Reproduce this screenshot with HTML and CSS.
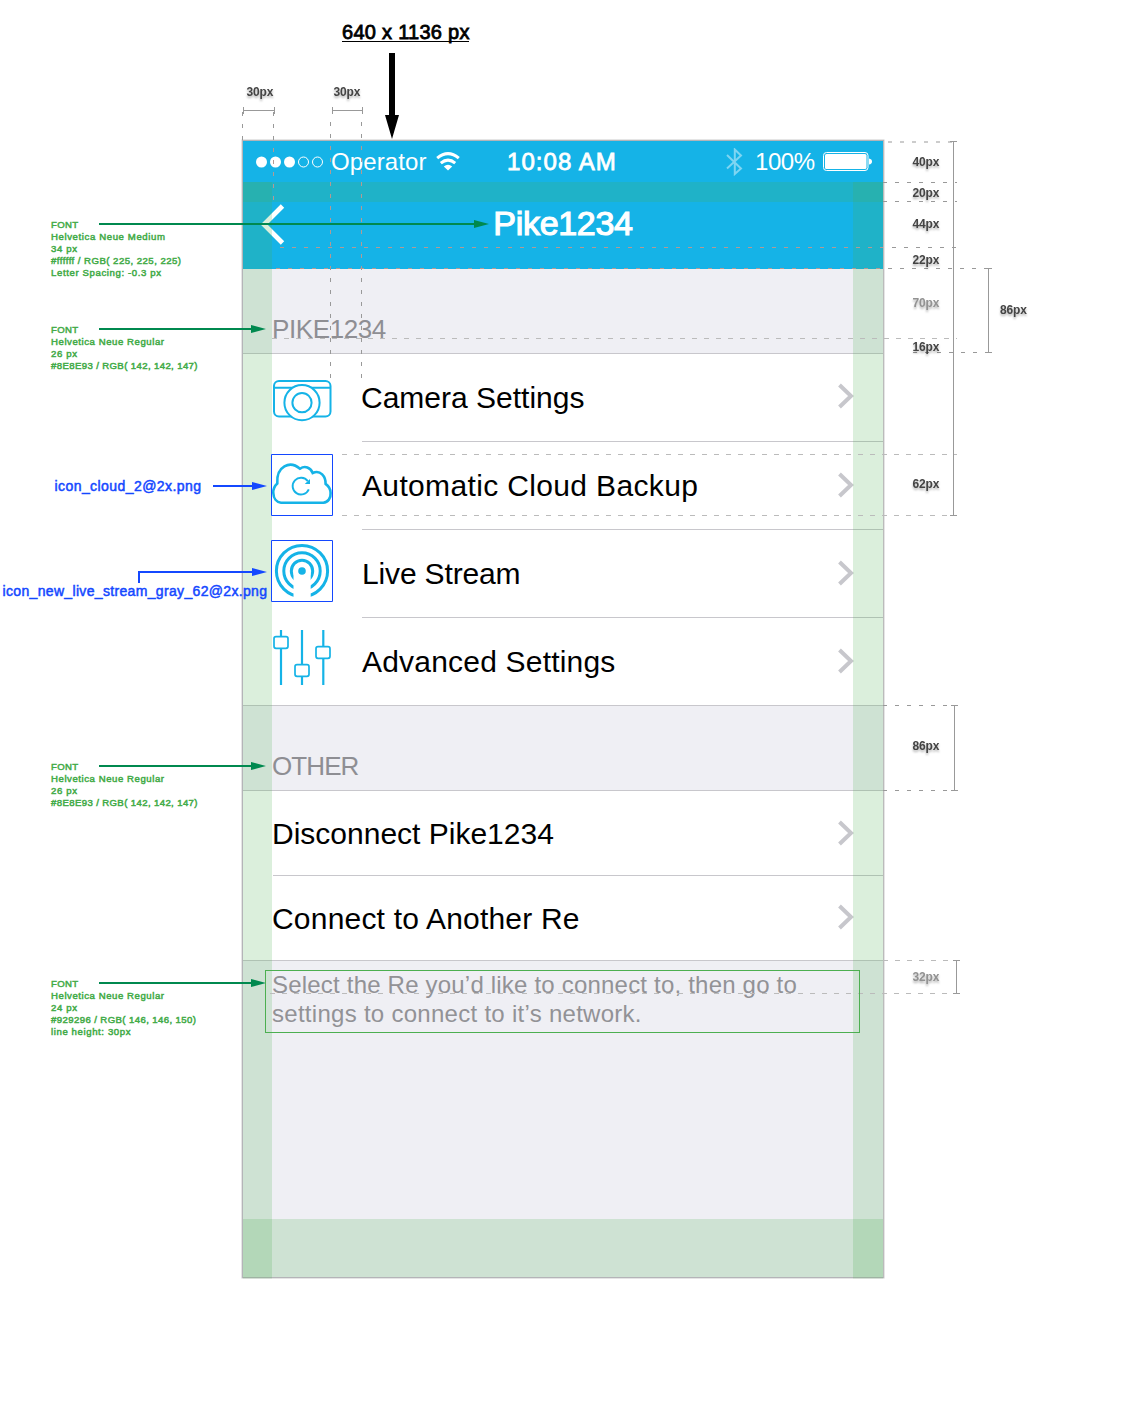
FILE: index.html
```html
<!DOCTYPE html>
<html lang="en">
<head>
<meta charset="utf-8">
<title>Pike1234 settings spec</title>
<link rel="stylesheet" href="styles.css">
</head>
<body>
<div class="sheet">
  <main class="phone">
    <header class="bar">
      <div class="status">
        <svg class="dots" width="70" height="14" viewBox="255 154.500 70 14"><g fill="#fff"><circle cx="261.500" cy="161.500" r="5.500"/><circle cx="275.500" cy="161.500" r="5.500"/><circle cx="289.500" cy="161.500" r="5.500"/></g><g fill="none" stroke="#fff"><circle cx="303.500" cy="161.500" r="5"/><circle cx="317.500" cy="161.500" r="5"/></g></svg>
        <span class="operator">Operator</span>
        <svg class="wifi" width="24" height="20" viewBox="436.500 152 24 20"><g fill="none" stroke="#fff" stroke-width="3"><path d="M437.700 158.200Q448.500 149 459.300 158.200"/><path d="M441.300 163.200Q448.500 157.100 455.700 163.200"/></g><path d="M444.300 166.600Q448.500 163 452.700 166.600L448.500 170.600Z" fill="#fff"/></svg>
        <span class="clock">10:08 AM</span>
        <svg class="bluetooth" width="18" height="28" viewBox="725 148 18 28"><path d="M727 155L741 168.500L734.800 174V149.500L741 155.500L727 168.500" fill="none" stroke="#fff" stroke-opacity=".45" stroke-width="2"/></svg>
        <span class="percent">100%</span>
        <svg class="battery" width="50" height="20" viewBox="823 152 50 20"><rect x="823.500" y="152.500" width="44.500" height="18" rx="3" fill="none" stroke="#fff"/><rect x="825" y="154" width="41.500" height="15" rx="1.500" fill="#fff"/><path d="M869 158.500Q872 159 872 161.500T869 164.500Z" fill="#fff"/></svg>
      </div>
      <div class="nav">
        <svg class="back" width="28" height="44" viewBox="258 202 28 44"><path d="M282.500 206L264 224.500L282.500 243" fill="none" stroke="#fff" stroke-width="4.800"/></svg>
        <h1>Pike1234</h1>
      </div>
    </header>

    <h2 class="section">PIKE1234</h2>
    <ul class="list with-icons">
      <li>
        <svg class="icon" viewBox="272 366 62 62"><rect x="274" y="381" width="56.500" height="35.500" rx="5"/><path d="M274 387.700H330.500"/><circle cx="302" cy="402.700" r="17.600" fill="#fff"/><circle cx="302" cy="402.700" r="9.600"/></svg>
        <span>Camera Settings</span><svg class="chevron" viewBox="0 0 16 26"><path d="M1.500 2L13 13L1.500 24"/></svg>
      </li>
      <li>
        <svg class="icon" viewBox="272 454 62 62"><g stroke-width="2.600"><path d="M281 502.700H323.300C328 502.400 331 498 330.600 493C330.500 488.500 328.500 486 325.600 483.900C325.800 476.500 320.500 469.500 312.700 473C310.500 467.500 305 465.200 300 468.700C290 460 276 466 277.300 483.500C274.500 486 273 488.500 273.300 493C273.600 498.500 276.500 502.300 281 502.700Z"/></g><g stroke-width="1.900"><path d="M308.800 489.300A8.400 8.400 0 1 1 307.800 481.100"/></g><path d="M304.800 484H310V479Z" fill="#15b3e7" stroke="none"/></svg>
        <span class="wide">Automatic Cloud Backup</span><svg class="chevron" viewBox="0 0 16 26"><path d="M1.500 2L13 13L1.500 24"/></svg>
      </li>
      <li>
        <svg class="icon" viewBox="272 542 62 62"><defs><clipPath id="mast"><path d="M270 540H335V605H310.700V571H293.500V605H270Z"/></clipPath></defs><g clip-path="url(#mast)" stroke-width="3"><circle cx="302" cy="571" r="25.600"/><circle cx="302" cy="571" r="18.200"/><circle cx="302" cy="571" r="10.700"/></g><circle cx="302" cy="571" r="3.800" fill="#15b3e7" stroke="none"/></svg>
        <span class="live">Live Stream</span><svg class="chevron" viewBox="0 0 16 26"><path d="M1.500 2L13 13L1.500 24"/></svg>
      </li>
      <li>
        <svg class="icon" viewBox="272 630 62 62"><path d="M281 630V685M302 630V685M323.300 630V685" stroke-width="2.200"/><g fill="#fff" stroke-width="1.700"><rect x="274" y="636.700" width="14" height="11.600" rx="2"/><rect x="295" y="664.700" width="14" height="11.600" rx="2"/><rect x="316" y="646.700" width="14" height="11.600" rx="2"/></g></svg>
        <span class="advanced">Advanced Settings</span><svg class="chevron" viewBox="0 0 16 26"><path d="M1.500 2L13 13L1.500 24"/></svg>
      </li>
    </ul>

    <h2 class="section other">OTHER</h2>
    <ul class="list plain">
      <li><span>Disconnect Pike1234</span><svg class="chevron" viewBox="0 0 16 26"><path d="M1.500 2L13 13L1.500 24"/></svg></li>
      <li><span class="connect">Connect to Another Re</span><svg class="chevron" viewBox="0 0 16 26"><path d="M1.500 2L13 13L1.500 24"/></svg></li>
    </ul>
    <p class="hint">Select the Re you’d like to connect to, then go to<br><span>settings to connect to it’s network.</span></p>
  </main>

  <svg class="notes" width="1126" height="1418" viewBox="0 0 1126 1418">
    <g class="guides">
      <rect x="243" y="182" width="640" height="20"/>
      <rect x="243" y="182" width="29" height="1096.500"/>
      <rect x="853" y="182" width="30" height="1096.500"/>
      <rect x="243" y="1219" width="640" height="58"/>
    </g>

    <g class="dashes">
      <path d="M242.500 112V141M273.500 112V141M330.500 122V378M361.500 122V378"/>
      <path d="M888 142H956M883 182.500H957M883 201.500H957M892 247.500H957M888 268.500H985M913 352.500H985"/>
      <path d="M883 705.500H957M883 790.500H957"/>
      <g class="warm"><path d="M273.500 148V200M330.500 146V268M361.500 146V268M280 247.500H883M276 268.500H883"/></g>
      <g class="faint"><path d="M272 338.500H957M342 454.500H957M342 515.500H957M883 960.500H957M270 993.500H957"/></g>
    </g>
    <g class="measures">
      <path d="M243 110.500H275M243.500 107V114M274.500 107V114M332 110.500H363M332.500 107V114M362.500 107V114"/>
      <path d="M953.500 141V516M950 141.500H957M950 515.500H957M988.500 268V353M985 268.500H992M985 352.500H992"/>
      <path d="M954.500 705V791M951 705.500H958M951 790.500H958M956.500 960V994M953 960.500H960M953 993.500H960"/>
    </g>
    <g class="sizes">
      <text x="246.500" y="96" textLength="27">30px</text>
      <text x="333.500" y="96" textLength="27">30px</text>
      <text x="912.500" y="166" textLength="27">40px</text>
      <text x="912.500" y="197" textLength="27">20px</text>
      <text x="912.500" y="228" textLength="27">44px</text>
      <text x="912.500" y="264" textLength="27">22px</text>
      <text class="pale" x="912.500" y="307" textLength="27">70px</text>
      <text x="912.500" y="351" textLength="27">16px</text>
      <text x="1000" y="314" textLength="27">86px</text>
      <text x="912.500" y="488" textLength="27">62px</text>
      <text x="912.500" y="750" textLength="27">86px</text>
      <text class="pale" x="912.500" y="981" textLength="27">32px</text>
    </g>

    <text class="canvas-size" x="342" y="39" textLength="127.500">640 x 1136 px</text>
    <path d="M342 41.500H469" stroke="#000"/>
    <path d="M389 53H395V115H399L392 139L385 115H389Z"/>

    <g class="font-notes">
      <text x="51" y="228" textLength="27">FONT</text>
      <text x="51" y="240" textLength="114">Helvetica Neue Medium</text>
      <text x="51" y="252" textLength="26">34 px</text>
      <text x="51" y="264" textLength="130">#ffffff / RGB( 225, 225, 225)</text>
      <text x="51" y="276" textLength="110">Letter Spacing: -0.3 px</text>
      <text x="51" y="333" textLength="27">FONT</text>
      <text x="51" y="345" textLength="113">Helvetica Neue Regular</text>
      <text x="51" y="357" textLength="26">26 px</text>
      <text x="51" y="369" textLength="146.500">#8E8E93 / RGB( 142, 142, 147)</text>
      <text x="51" y="770" textLength="27">FONT</text>
      <text x="51" y="782" textLength="113">Helvetica Neue Regular</text>
      <text x="51" y="794" textLength="26">26 px</text>
      <text x="51" y="806" textLength="146.500">#8E8E93 / RGB( 142, 142, 147)</text>
      <text x="51" y="987" textLength="27">FONT</text>
      <text x="51" y="999" textLength="113">Helvetica Neue Regular</text>
      <text x="51" y="1011" textLength="26">24 px</text>
      <text x="51" y="1023" textLength="145">#929296 / RGB( 146, 146, 150)</text>
      <text x="51" y="1035" textLength="79.500">line height: 30px</text>
    </g>
    <g class="green-arrows">
      <path d="M99 224H476M99 329H253M99 766H253M99 983H253"/>
      <path class="head" d="M474 220L489 224L474 228ZM251 325L266 329L251 333ZM251 762L266 766L251 770ZM251 979L266 983L251 987Z"/>
    </g>
    <rect x="265.500" y="970.500" width="594" height="62" fill="none" stroke="#4caf50"/>

    <g class="file-notes">
      <text x="54.500" y="491" textLength="146.500">icon_cloud_2@2x.png</text>
      <text x="2.500" y="596" textLength="264.500">icon_new_live_stream_gray_62@2x.png</text>
    </g>
    <g class="blue-arrows">
      <path d="M213 486H254M139 583V572H254"/>
      <path class="head" d="M252 482L267 486L252 490ZM252 568L267 572L252 576Z"/>
      <path class="frame" d="M271.500 454.500H332.500V515.500H271.500ZM271.500 540.500H332.500V601.500H271.500Z"/>
    </g>
  </svg>
</div>
</body>
</html>
```

FILE: styles.css
```css
* { box-sizing: border-box; }
body { margin: 0; background: #fff; font-family: "Liberation Sans", Arial, sans-serif; }
.sheet { position: relative; width: 1126px; height: 1418px; padding: 140px 0 0 242px; }

.phone { width: 642px; height: 1138px; border: 1px solid #b4b4b8; border-right-color: #bbb; background: #efeff4; box-shadow: 0 0 0 .5px #ccc; }
.bar { height: 128px; background: #15b3e7; color: #fff; }
.status { display: flex; align-items: center; height: 41px; padding-left: 12px; font-size: 24px; line-height: 28px; white-space: nowrap; }
.status svg { flex: none; }
.operator { width: 105px; margin-left: 6px; letter-spacing: .1px; }
.clock { width: 218px; margin-left: 47px; letter-spacing: 1.05px; -webkit-text-stroke: .8px #fff; }
.percent { width: 69px; margin-left: 12px; letter-spacing: -.45px; }
.battery { margin-left: -1px; }
.nav { display: grid; grid-template-columns: 28px 1fr 28px; align-items: start; height: 87px; padding: 20px 15px 0; }
.nav h1 { margin: 1px 0 0; font-size: 34px; line-height: 40px; font-weight: normal; letter-spacing: -.3px; -webkit-text-stroke: 1.2px #fff; text-align: center; }

.section { display: flex; align-items: flex-end; height: 85px; margin: 0; padding: 0 0 9px 29px; border-bottom: 1px solid #c8c7cc; font-size: 26px; line-height: 29px; font-weight: normal; color: #8e8e93; letter-spacing: -.4px; }
.other { letter-spacing: -.9px; }
.list { list-style: none; margin: 0; padding: 0; background: #fff; border-bottom: 1px solid #c8c7cc; }
.list li { display: flex; align-items: center; height: 88px; padding: 0 29px; font-size: 30px; line-height: 34px; color: #000; }
.list li:last-child { height: 87px; }
.plain li, .plain li:last-child { height: 85px; }
.plain li:last-child { height: 84px; }
.list span { flex: 1; white-space: nowrap; }
.with-icons li { background: linear-gradient(#c8c7cc, #c8c7cc) 119px 100% / 521px 1px no-repeat; }
.plain li { background: linear-gradient(#c8c7cc, #c8c7cc) 30px 100% / 610px 1px no-repeat; }
.list li:last-child { background: none; }
.icon { align-self: flex-start; width: 62px; height: 62px; margin: 12px 27px 0 0; overflow: visible; fill: none; stroke: #15b3e7; stroke-width: 2; }
.with-icons li:nth-child(n+2) .icon { margin-right: 28px; }
.chevron { width: 16px; height: 26px; margin-bottom: 5px; fill: none; stroke: #c7c7cc; stroke-width: 4; }
.with-icons li:nth-child(n+2) .chevron { margin-bottom: 3px; }
.with-icons li:last-child .chevron { margin-bottom: 2px; }
.plain .chevron { margin-bottom: 1px; }
.plain li:last-child .chevron { margin-bottom: 3px; }
.wide { letter-spacing: .35px; }
.live { letter-spacing: -.15px; }
.advanced { letter-spacing: .2px; }
.list .connect { padding-top: 2px; letter-spacing: .2px; }
.hint { margin: 0; padding: 9px 0 0 29px; font-size: 24px; line-height: 29px; color: #929296; white-space: nowrap; letter-spacing: .2px; }
.hint span { letter-spacing: .28px; }

.notes { position: absolute; left: 0; top: 0; }
.guides { fill: rgba(76, 175, 80, .2); }
.dashes { fill: none; stroke: #999; stroke-dasharray: 4 8; }
.warm { stroke: #b39a94; }
.faint { stroke: #bbb; stroke-dasharray: 5 7; }
.measures { fill: none; stroke: #999; }
.sizes { font-size: 12px; font-weight: bold; fill: #444; filter: drop-shadow(0 2px 1px rgba(0, 0, 0, .3)); }
.pale { fill: #929292; }
.canvas-size { font-size: 20px; stroke: #000; stroke-width: .8px; }
.font-notes { font-size: 9.6px; fill: #43ab48; stroke: #43ab48; stroke-width: .5px; }
.green-arrows { fill: none; stroke: #00894f; stroke-width: 2; }
.green-arrows .head { fill: #00894f; stroke: none; }
.file-notes { font-size: 14px; fill: #1448ff; stroke: #1448ff; stroke-width: .5px; }
.blue-arrows { fill: none; stroke: #1448ff; stroke-width: 2; }
.blue-arrows .head { fill: #1448ff; stroke: none; }
.blue-arrows .frame { stroke-width: 1; }
```
